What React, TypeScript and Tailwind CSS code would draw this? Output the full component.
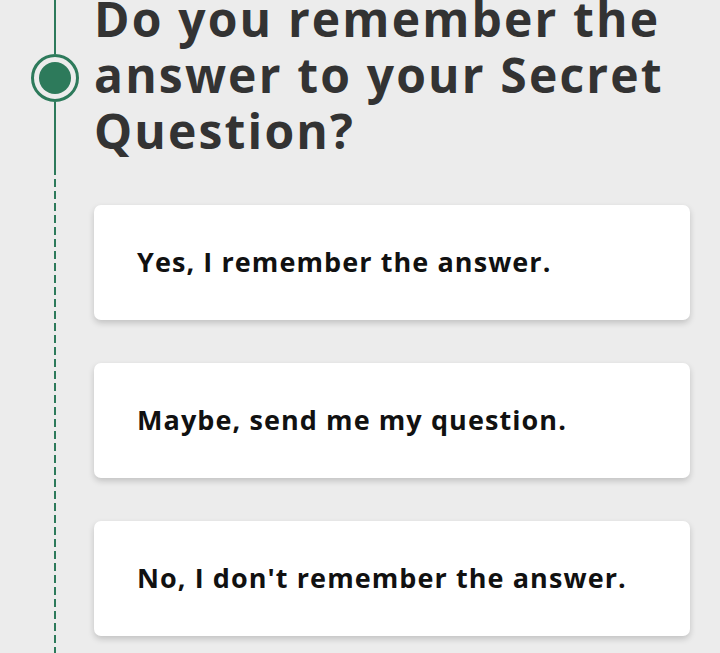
const ANSWERS = [
  "Yes, I remember the answer.",
  "Maybe, send me my question.",
  "No, I don't remember the answer.",
];

export default function App() {
  return (
    <div
      className="flex h-[653px] w-full overflow-hidden bg-[#ececec]"
      style={{ fontFamily: "'Open Sans', 'Liberation Sans', sans-serif" }}
    >
      {/* timeline rail */}
      <div className="w-[94px] shrink-0">
        <div className="ml-[31px] flex h-full w-12 flex-col items-center">
          <div className="h-[54px] w-[2px] bg-[#2d7a5b]" />
          <div className="flex h-12 w-12 items-center justify-center rounded-full border-[3px] border-[#2d7a5b]">
            <div className="h-8 w-8 rounded-full bg-[#2d7a5b]" />
          </div>
          <div className="h-[65px] w-[2px] bg-[#2d7a5b]" />
          <div className="w-[2px] flex-1 bg-[repeating-linear-gradient(to_bottom,#2d7a5b_0px,#2d7a5b_8px,transparent_8px,transparent_12px)]" />
        </div>
      </div>

      {/* question + answers */}
      <div className="flex flex-1 flex-col pr-[20px]">
        <h1 className="mt-[-9px] text-[48px] font-bold leading-[56px] tracking-[0.045em] text-[#333333]">
          Do you remember the answer to your Secret Question?
        </h1>
        <div className="mt-[46px] mr-[10px] flex flex-col gap-[43px]">
          {ANSWERS.map((a) => (
            <button
              key={a}
              type="button"
              className="flex h-[115px] items-center rounded-[7px] bg-white pl-[43px] text-left text-[27px] font-bold tracking-[0.04em] text-[#111111] shadow-[0_3px_6px_rgba(0,0,0,0.18)]"
            >
              {a}
            </button>
          ))}
        </div>
      </div>
    </div>
  );
}
